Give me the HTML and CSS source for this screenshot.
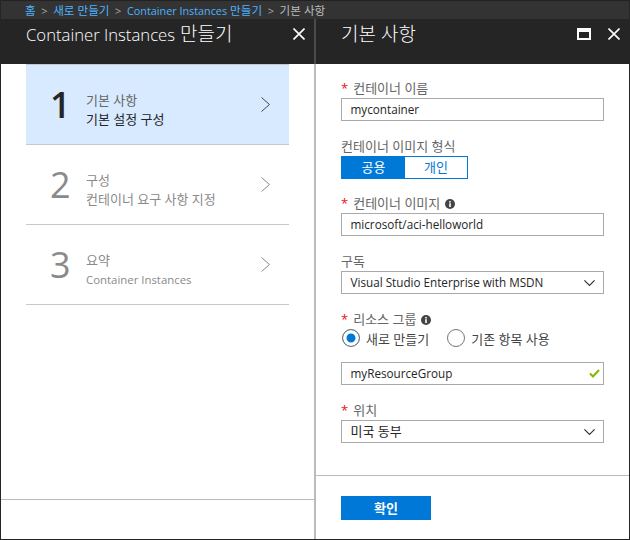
FILE: index.html
```html
<!DOCTYPE html>
<html lang="ko">

<head>
    <meta charset="UTF-8">
    <title>Container Instances 만들기</title>
    <link rel="stylesheet" href="styles.css">
</head>

<body>
    <div class="window">
        <div class="breadcrumb">
            <a>홈</a><span class="sep">&gt;</span>
            <a>새로 만들기</a><span class="sep">&gt;</span>
            <a><span class="latin">Container Instances</span> 만들기</a><span class="sep">&gt;</span>
            <span class="current">기본 사항</span>
        </div>
        <div class="blades">
            <div class="blade blade-left">
                <div class="blade-head">
                    <div class="blade-title"><span class="latin">Container Instances</span> 만들기</div>
                    <svg class="head-icon" width="12" height="12" viewBox="0 0 12 12"><path d="M0.5 0.5L11.5 11.5M11.5 0.5L0.5 11.5" stroke="#fff" stroke-width="1.6" fill="none"/></svg>
                </div>
                <div class="blade-body">
                    <div class="steps">
                        <div class="step step-active">
                            <div class="step-num">1</div>
                            <div class="step-text">
                                <div class="step-name">기본 사항</div>
                                <div class="step-desc">기본 설정 구성</div>
                            </div>
                            <svg class="step-arrow" width="9" height="15" viewBox="0 0 9 15"><path d="M0.5 0.5L8.5 7.5L0.5 14.5" stroke="#444" stroke-width="1" fill="none"/></svg>
                        </div>
                        <div class="step">
                            <div class="step-num">2</div>
                            <div class="step-text">
                                <div class="step-name">구성</div>
                                <div class="step-desc">컨테이너 요구 사항 지정</div>
                            </div>
                            <svg class="step-arrow" width="9" height="15" viewBox="0 0 9 15"><path d="M0.5 0.5L8.5 7.5L0.5 14.5" stroke="#888" stroke-width="1" fill="none"/></svg>
                        </div>
                        <div class="step">
                            <div class="step-num">3</div>
                            <div class="step-text">
                                <div class="step-name">요약</div>
                                <div class="step-desc latin">Container Instances</div>
                            </div>
                            <svg class="step-arrow" width="9" height="15" viewBox="0 0 9 15"><path d="M0.5 0.5L8.5 7.5L0.5 14.5" stroke="#888" stroke-width="1" fill="none"/></svg>
                        </div>
                    </div>
                    <div class="blade-foot foot-left"></div>
                </div>
            </div>
            <div class="blade blade-right">
                <div class="blade-head">
                    <div class="blade-title">기본 사항</div>
                    <svg class="head-icon icon-max" width="14" height="12" viewBox="0 0 14 12"><path d="M0 0H14V12H0ZM2 4V10H12V4Z" fill="#fff" fill-rule="evenodd"/></svg>
                    <svg class="head-icon" width="12" height="12" viewBox="0 0 12 12"><path d="M0.5 0.5L11.5 11.5M11.5 0.5L0.5 11.5" stroke="#fff" stroke-width="1.6" fill="none"/></svg>
                </div>
                <div class="blade-body">
                    <div class="form">
                        <div class="field">
                            <div class="label"><span class="req">*</span>컨테이너 이름</div>
                            <div class="input">mycontainer</div>
                        </div>
                        <div class="field field-tight">
                            <div class="label">컨테이너 이미지 형식</div>
                            <div class="toggle">
                                <div class="toggle-on">공용</div>
                                <div class="toggle-off">개인</div>
                            </div>
                        </div>
                        <div class="field">
                            <div class="label"><span class="req">*</span>컨테이너 이미지
                                <svg class="info" width="10" height="10" viewBox="0 0 10 10"><circle cx="5" cy="5" r="5" fill="#444"/><rect x="4.2" y="4.2" width="1.6" height="3.8" fill="#fff"/><rect x="4.2" y="2" width="1.6" height="1.5" fill="#fff"/></svg>
                            </div>
                            <div class="input">microsoft/aci-helloworld</div>
                        </div>
                        <div class="field">
                            <div class="label">구독</div>
                            <div class="input select">Visual Studio Enterprise with MSDN
                                <svg width="11" height="6" viewBox="0 0 11 6"><path d="M0.4 0.4L5.5 5.4L10.6 0.4" stroke="#333" stroke-width="1.2" fill="none"/></svg>
                            </div>
                        </div>
                        <div class="field">
                            <div class="label"><span class="req">*</span>리소스 그룹
                                <svg class="info" width="10" height="10" viewBox="0 0 10 10"><circle cx="5" cy="5" r="5" fill="#444"/><rect x="4.2" y="4.2" width="1.6" height="3.8" fill="#fff"/><rect x="4.2" y="2" width="1.6" height="1.5" fill="#fff"/></svg>
                            </div>
                            <div class="radios">
                                <div class="radio radio-on"><span class="dot"></span>새로 만들기</div>
                                <div class="radio"><span class="dot"></span>기존 항목 사용</div>
                            </div>
                            <div class="input select input-ok">myResourceGroup
                                <svg width="11" height="9" viewBox="0 0 11 9"><path d="M1 4.5L4 7.5L10 1" stroke="#7fba00" stroke-width="2" fill="none"/></svg>
                            </div>
                        </div>
                        <div class="field">
                            <div class="label"><span class="req">*</span>위치</div>
                            <div class="input select input-ko">미국 동부
                                <svg width="11" height="6" viewBox="0 0 11 6"><path d="M0.4 0.4L5.5 5.4L10.6 0.4" stroke="#333" stroke-width="1.2" fill="none"/></svg>
                            </div>
                        </div>
                    </div>
                    <div class="blade-foot foot-right">
                        <div class="btn">확인</div>
                    </div>
                </div>
            </div>
        </div>
    </div>
</body>

</html>
```

FILE: styles.css
```css
* {
    box-sizing: border-box;
}

body {
    margin: 0;
    font-family: "Open Sans", "Noto Sans CJK KR", sans-serif;
    font-size: 13px;
    color: #252525;
}

.window {
    width: 630px;
    height: 540px;
    display: flex;
    flex-direction: column;
    border-left: 1px solid #252525;
    border-right: 1px solid #252525;
    border-bottom: 1px solid #252525;
    background-color: #fff;
}

.breadcrumb {
    height: 19px;
    flex: none;
    display: flex;
    align-items: center;
    padding-left: 24px;
    background-color: #333;
    border-top: 1px solid #222;
    font-size: 11.6px;
    color: #bbb;
}

.breadcrumb a {
    color: #4db2ff;
}

.breadcrumb .latin {
    font-size: 10.8px;
}

.sep {
    width: 17.5px;
    font-size: 11px;
    text-align: center;
    color: #aaa;
}

.blades {
    flex: 1;
    display: flex;
    min-height: 0;
}

.blade {
    display: flex;
    flex-direction: column;
}

.blade-left {
    width: 313px;
}

.blade-right {
    flex: 1;
    border-left: 2px solid #bbb;
}

.blade-head {
    height: 45px;
    flex: none;
    display: flex;
    align-items: flex-start;
    padding: 3px 9px 0 25px;
    background-color: #252525;
    color: #fff;
}

.blade-right .blade-head {
    margin-left: -2px;
    padding-left: 25px;
    border-left: 2px solid #4a4a4a;
}

.blade-title {
    flex: 1;
    font-size: 19px;
    font-weight: 300;
    line-height: 24px;
}

.blade-title .latin {
    font-size: 16.7px;
}

.head-icon {
    margin-top: 6px;
    flex: none;
}

.icon-max {
    margin-right: 17px;
}

.blade-body {
    flex: 1;
    display: flex;
    flex-direction: column;
    min-height: 0;
}

.steps {
    flex: 1;
    padding-left: 25px;
}

.step {
    width: 263px;
    height: 80px;
    display: flex;
    align-items: center;
    padding: 0 19px 0 25px;
    border-bottom: 1px solid #c8c8c8;
    color: #8a8a8a;
}

.step-active {
    height: 81px;
    background-color: #d7eaff;
    border-top: 1px solid #c8c8c8;
    color: #252525;
}

.step-num {
    width: 35px;
    font-size: 36px;
    margin-left: -1px;
    margin-right: 1px;
}

.step-active .step-num {
    font-weight: 600;
}

.step-text {
    flex: 1;
    padding-top: 10px;
}

.step-name {
    line-height: 19px;
}

.step-active .step-name {
    color: #666;
}

.step-desc {
    line-height: 19px;
}

.step-desc.latin {
    font-size: 11.4px;
}

.blade-foot {
    flex: none;
    border-top: 1px solid #bbb;
}

.foot-left {
    height: 40px;
}

.foot-right {
    height: 64px;
    padding: 20px 0 0 25px;
}

.form {
    flex: 1;
    padding: 14px 25px 0 25px;
}

.field {
    margin-bottom: 15px;
}

.field-tight {
    margin-bottom: 14px;
}

.label {
    height: 20px;
    line-height: 20px;
    color: #666;
}

.req {
    color: #e81123;
    margin-right: 5px;
}

.info {
    margin-left: 1.5px;
    vertical-align: -1px;
}

.input {
    height: 23px;
    line-height: 21px;
    padding-left: 8.5px;
    border: 1px solid #aaa;
    font-size: 11.7px;
    color: #252525;
}

.input-ko {
    font-size: 13px;
}

.select {
    display: flex;
    align-items: center;
    justify-content: space-between;
    padding-right: 8px;
}

.input-ok {
    padding-right: 3px;
}

.toggle {
    width: 127px;
    height: 23px;
    display: flex;
    border: 1px solid #0078d7;
    line-height: 21px;
    text-align: center;
}

.toggle-on {
    width: 63px;
    background-color: #0078d7;
    color: #fff;
}

.toggle-off {
    flex: 1;
    color: #0078d7;
}

.radios {
    display: flex;
    height: 18px;
    margin: 0 0 15px 1px;
    gap: 18px;
}

.radio {
    display: flex;
    align-items: center;
    gap: 6px;
    color: #444;
}

.dot {
    width: 18px;
    height: 18px;
    border: 1px solid #777;
    border-radius: 50%;
}

.radio-on .dot {
    background-color: #0078d7;
    box-shadow: inset 0 0 0 3.5px #fff;
}

.btn {
    width: 90px;
    height: 24px;
    line-height: 24px;
    text-align: center;
    background-color: #0078d7;
    color: #fff;
    font-weight: 700;
}
```
